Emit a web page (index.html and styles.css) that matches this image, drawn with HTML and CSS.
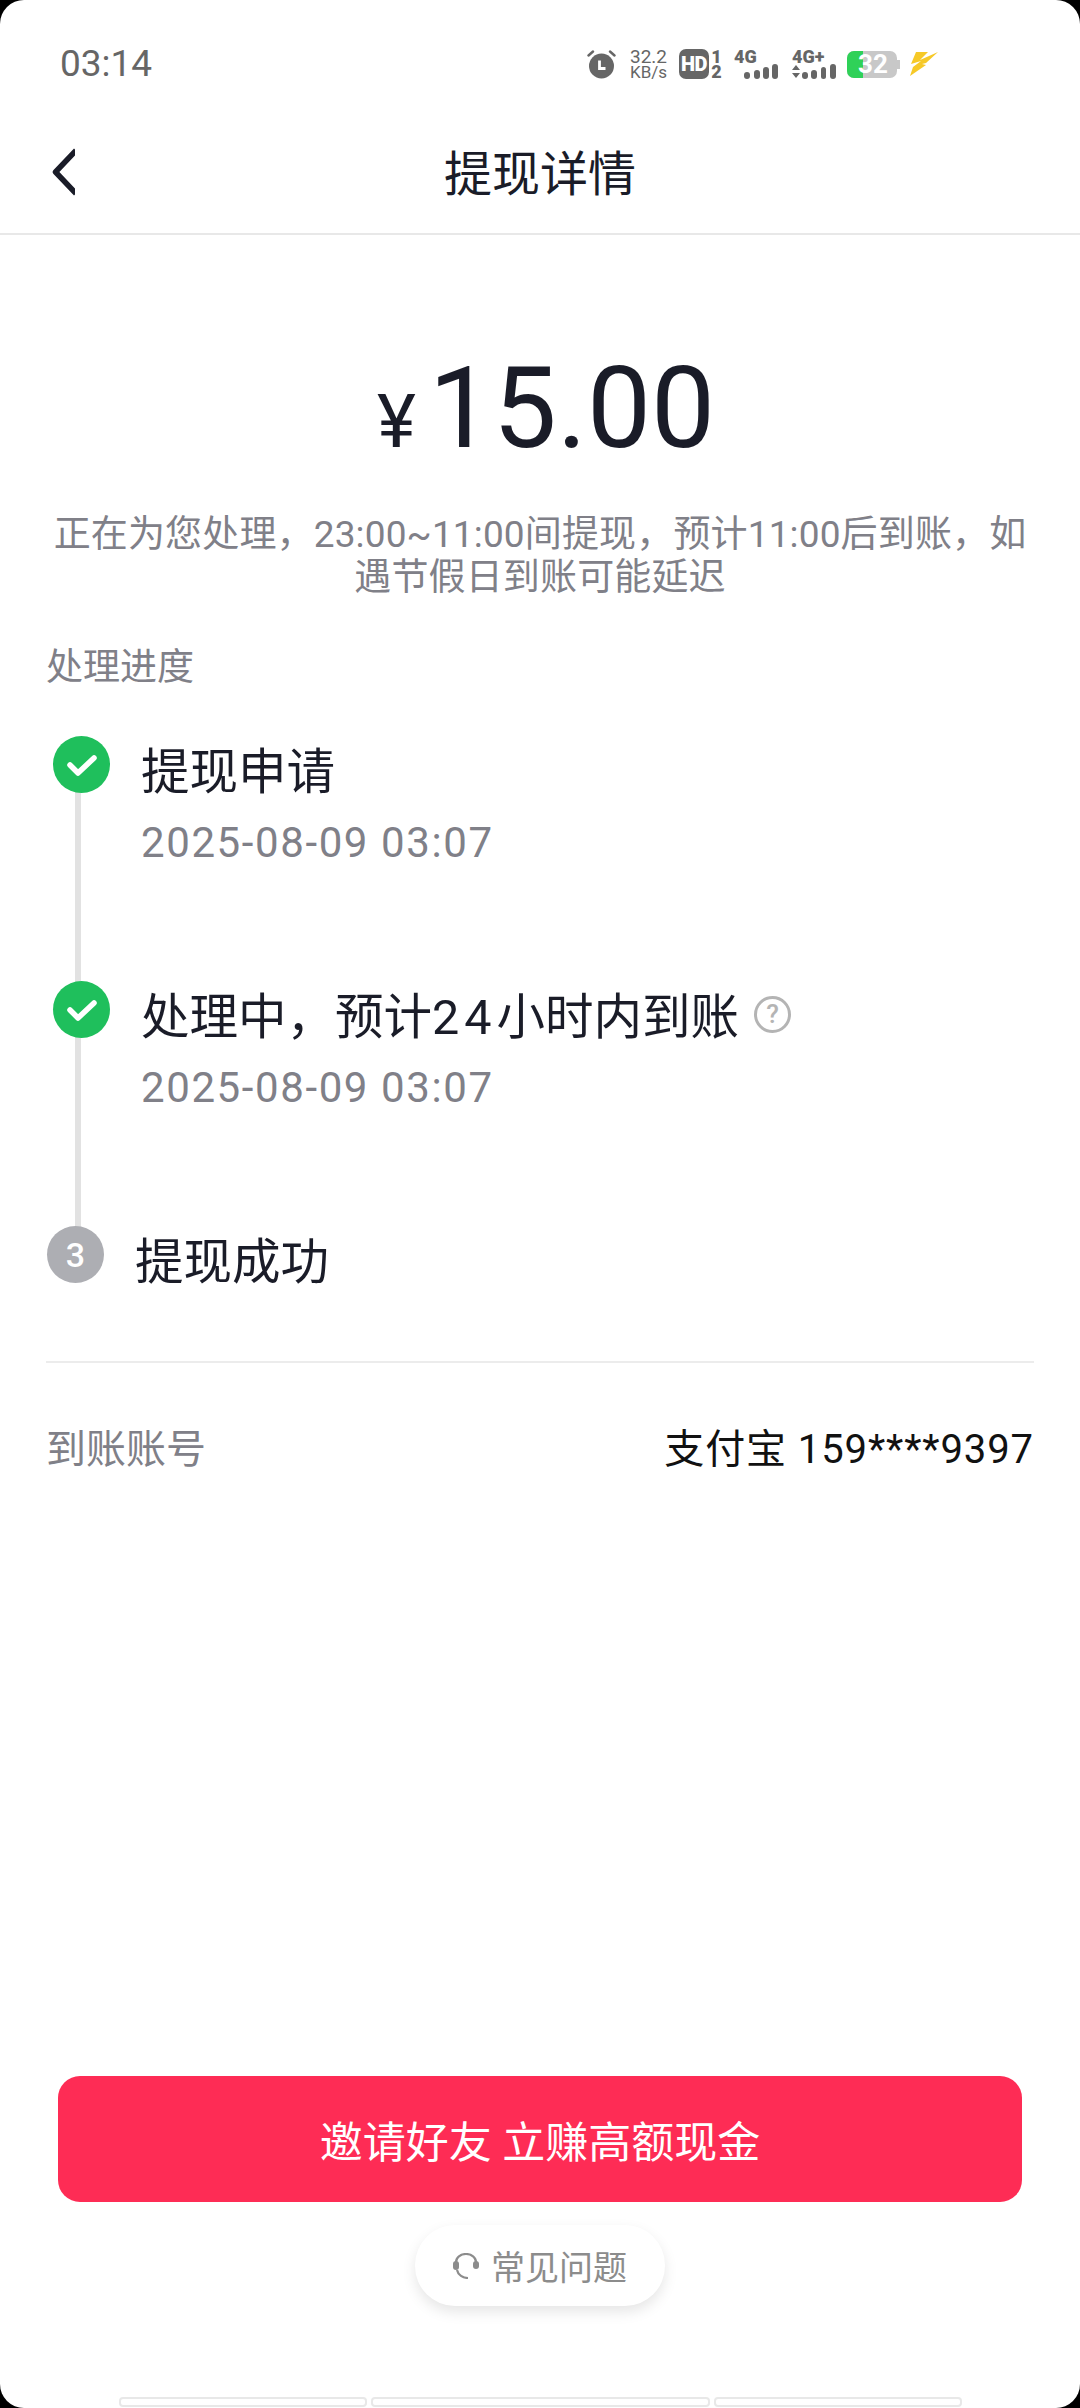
FILE: index.html
```html
<!DOCTYPE html>
<html lang="zh-CN">
<head>
  <meta charset="UTF-8" />
  <meta name="viewport" content="width=device-width, initial-scale=1" />
  <title>提现详情</title>
  <link rel="stylesheet" href="styles.css">
</head>
<body>
  <div class="screen">
    <div class="status-bar">
      <span class="clock">03:14</span>
      <div class="status-icons">
        <svg class="ic-alarm" width="29" height="29" viewBox="0 0 29 29">
          <circle cx="14.5" cy="16" r="12.500" fill="#666"/>
          <path d="M1.500 5.500l4.500-4M27.500 5.500l-4.500-4" stroke="#666" stroke-width="2.400" stroke-linecap="round"/>
          <path d="M12.500 10.500v8h6" fill="none" stroke="#fff" stroke-width="2.800"/>
        </svg>
        <div class="net-speed"><span class="speed-num">32.2</span><span class="speed-unit">KB/s</span></div>
        <div class="hd">
          <span class="hd-box">HD</span>
          <div class="hd-sims"><span>1</span><span>2</span></div>
        </div>
        <div class="signal signal-first">
          <span class="net-label">4G</span>
          <svg width="34" height="15" viewBox="0 0 34 15">
            <rect x="0" y="8" width="6" height="7" rx="3" fill="#666"/>
            <rect x="10" y="6" width="6" height="9" rx="3" fill="#666"/>
            <rect x="19" y="3" width="6" height="12" rx="3" fill="#666"/>
            <rect x="28" y="0" width="6" height="15" rx="3" fill="#666"/>
          </svg>
        </div>
        <div class="signal">
          <span class="net-label">4G+</span>
          <svg width="44" height="15" viewBox="0 0 44 15">
            <path d="M0 6l4-5 4 5zM0 9l4 5 4-5z" fill="#666"/>
            <rect x="10" y="8" width="6" height="7" rx="3" fill="#666"/>
            <rect x="19" y="6" width="6" height="9" rx="3" fill="#666"/>
            <rect x="29" y="3" width="5" height="12" rx="2.500" fill="#666"/>
            <rect x="38" y="0" width="6" height="15" rx="3" fill="#666"/>
          </svg>
        </div>
        <div class="battery">
          <div class="battery-fill"></div>
          <span class="battery-num">32</span>
          <div class="battery-tip"></div>
        </div>
        <svg class="ic-bolt" width="30" height="24" viewBox="0 0 30 24">
          <path d="M8 0h12l-8 8L30 0 18 11l-4 1 4 1L2 24l3-9 8-6-10 3z" fill="#f6c928"/>
        </svg>
      </div>
    </div>

    <header class="nav">
      <svg class="back" width="23" height="48" viewBox="0 0 23 48">
        <path d="M24 2.500L3.500 24 24 45.500" fill="none" stroke="#1a1c28" stroke-width="5.500" stroke-linejoin="round"/>
      </svg>
      <h1>提现详情</h1>
    </header>

    <main class="content">
      <div class="amount"><span class="yen">¥</span><span class="money">15.00</span></div>
      <p class="notice">正在为您处理，23:00~11:00间提现，预计11:00后到账，如遇节假日到账可能延迟</p>

      <div class="section-title">处理进度</div>

      <ol class="steps">
        <li class="step">
          <span class="dot dot-done">
            <svg width="32" height="24" viewBox="0 0 32 24"><path d="M4 12l8 8L28 5" fill="none" stroke="#fff" stroke-width="5.500" stroke-linecap="round" stroke-linejoin="round"/></svg>
          </span>
          <div class="step-body">
            <div class="step-title">提现申请</div>
            <div class="step-time">2025-08-09 03:07</div>
          </div>
        </li>
        <li class="step">
          <span class="dot dot-done">
            <svg width="32" height="24" viewBox="0 0 32 24"><path d="M4 12l8 8L28 5" fill="none" stroke="#fff" stroke-width="5.500" stroke-linecap="round" stroke-linejoin="round"/></svg>
          </span>
          <div class="step-body">
            <div class="step-title"><span>处理中，预计<span class="num">24</span>小时内到账</span>
              <span class="help">?</span>
            </div>
            <div class="step-time">2025-08-09 03:07</div>
          </div>
        </li>
        <li class="step step-last">
          <span class="dot dot-todo">3</span>
          <div class="step-body">
            <div class="step-title">提现成功</div>
          </div>
        </li>
      </ol>

      <div class="account">
        <span class="account-label">到账账号</span>
        <span class="account-value">支付宝 159****9397</span>
      </div>
    </main>

    <div class="bottom">
      <button class="invite" type="button">邀请好友 立赚高额现金</button>
      <div class="faq">
        <svg width="26" height="26" viewBox="0 0 26 26">
          <path d="M23 9A10 8 0 0 0 3 9M4 17c1 5 6 8 11 8" fill="none" stroke="#8c8c8c" stroke-width="2.200"/>
          <rect x="0" y="8" width="6" height="9" rx="3" fill="#8c8c8c"/>
          <rect x="20" y="8" width="6" height="8" rx="3" fill="#8c8c8c"/>
        </svg>
        <span>常见问题</span>
      </div>
    </div>

    <div class="ghost-tabs">
      <span class="tab-a"></span>
      <span class="tab-b"></span>
      <span class="tab-a"></span>
    </div>
  </div>
</body>
</html>
```
FILE: styles.css
```css
* {
  box-sizing: border-box;
}
html, body {
  margin: 0;
  background: #000;
}
body {
  font-family: "Roboto", "Noto Sans CJK SC", sans-serif;
  color: #1a1c28;
}
.screen {
  width: 1080px;
  height: 2408px;
  background: #fff;
  border-radius: 24px;
  overflow: hidden;
  display: flex;
  flex-direction: column;
}

/* status bar */
.status-bar {
  height: 122px;
  padding: 43px 142px 0 60px;
  display: flex;
  justify-content: space-between;
  align-items: flex-start;
}
.clock {
  font-size: 37px;
  line-height: 42px;
  color: #666;
}
.status-icons {
  display: flex;
  align-items: center;
  gap: 12px;
  height: 42px;
  color: #666;
}
.ic-alarm {
  margin-right: 2px;
}
.net-speed {
  display: flex;
  flex-direction: column;
  align-items: center;
  width: 37px;
}
.speed-num {
  font-size: 19px;
  line-height: 17px;
}
.speed-unit {
  font-size: 17px;
  line-height: 15px;
}
.hd {
  display: flex;
  gap: 2px;
  height: 30px;
}
.hd-box {
  width: 30px;
  height: 30px;
  border-radius: 7px;
  background: #666;
  color: #fff;
  font-size: 20px;
  font-weight: 900;
  line-height: 30px;
  text-align: center;
  letter-spacing: -0.5px;
}
.hd-sims {
  width: 11px;
  display: flex;
  flex-direction: column;
  align-items: center;
  justify-content: space-between;
  font-size: 18px;
  font-weight: 900;
  line-height: 15px;
}
.signal {
  width: 44px;
  height: 29px;
  display: flex;
  flex-direction: column;
  align-items: flex-end;
}
.signal-first {
  margin-right: 2px;
}
.net-label {
  align-self: flex-start;
  height: 14px;
  font-size: 18px;
  line-height: 14px;
  font-weight: 900;
}
.battery {
  position: relative;
  width: 50px;
  height: 27px;
  margin: 0 -1px;
  background: #c8c8c8;
  border-radius: 7px;
}
.battery-fill {
  width: 16px;
  height: 27px;
  background: #2fd158;
  border-radius: 7px 0 0 7px;
}
.battery-num {
  position: absolute;
  left: 11px;
  top: 0;
  font-size: 26px;
  line-height: 27px;
  font-weight: 700;
  color: #fff;
}
.battery-tip {
  position: absolute;
  right: -3px;
  top: 9px;
  width: 3px;
  height: 9px;
  background: #c8c8c8;
}

/* nav */
.nav {
  position: relative;
  height: 113px;
  padding-bottom: 6px;
  border-bottom: 2px solid #e8e8e8;
  display: flex;
  align-items: center;
  justify-content: center;
}
.nav h1 {
  margin: 0;
  font-size: 48px;
  font-weight: 400;
  line-height: 60px;
  color: #1a1c28;
}
.back {
  position: absolute;
  left: 52px;
  top: 26px;
}

/* content */
.content {
  flex: 1;
  padding: 0 46px;
}
.amount {
  margin-top: 118px;
  padding-left: 12px;
  height: 110px;
  display: flex;
  justify-content: center;
  align-items: baseline;
  line-height: 110px;
}
.yen {
  font-size: 74px;
  margin-right: 13px;
}
.money {
  font-size: 114px;
}
.notice {
  margin: 50px 0 0;
  font-size: 37px;
  line-height: 43px;
  letter-spacing: 0.150px;
  color: #808088;
  text-align: center;
}
.section-title {
  margin-top: 45px;
  font-size: 37px;
  line-height: 48px;
  color: #808088;
}
.steps {
  list-style: none;
  margin: 44px 0 0;
  padding: 0;
}
.step {
  position: relative;
  display: flex;
  height: 245px;
  padding-left: 7px;
}
.step::before {
  content: "";
  position: absolute;
  left: 29px;
  top: 50px;
  bottom: -10px;
  width: 6px;
  background: #e2e2e2;
}
.step-last {
  height: 58px;
  padding-left: 1px;
}
.step-last::before {
  display: none;
}
.dot {
  position: relative;
  flex: none;
  width: 57px;
  height: 57px;
  border-radius: 50%;
  display: flex;
  align-items: center;
  justify-content: center;
  color: #fff;
  font-size: 34px;
  font-weight: 500;
}
.dot-done {
  background: #1fbf5c;
}
.dot-todo {
  background: #adaeb3;
}
.step-body {
  margin: 5px 0 0 31px;
}
.step-title {
  display: flex;
  align-items: center;
  font-size: 48.500px;
  line-height: 64px;
  color: #1a1c28;
}
.num {
  letter-spacing: 5px;
}
.step-time {
  margin-top: 13px;
  font-size: 42px;
  line-height: 50px;
  letter-spacing: 1.600px;
  color: #808088;
}
.help {
  width: 37px;
  height: 37px;
  margin: -8px 0 0 15px;
  border: 3px solid #b4b4b4;
  border-radius: 50%;
  color: #b4b4b4;
  font-size: 26px;
  font-weight: 500;
  line-height: 31px;
  text-align: center;
}
.account {
  margin-top: 77px;
  border-top: 2px solid #ececec;
  padding-top: 62px;
  display: flex;
  justify-content: space-between;
  align-items: center;
  font-size: 40px;
  line-height: 50px;
}
.account-label {
  color: #808088;
}
.account-value {
  color: #111;
  letter-spacing: 0.900px;
}

/* bottom */
.bottom {
  display: flex;
  flex-direction: column;
  align-items: center;
}
.invite {
  width: 964px;
  height: 126px;
  border: none;
  border-radius: 22px;
  background: #fe2c55;
  color: #fff;
  font-family: inherit;
  font-size: 43px;
}
.faq {
  margin-top: 23px;
  width: 250px;
  height: 81px;
  border-radius: 40px;
  background: #fff;
  box-shadow: 0 6px 14px rgba(0,0,0,0.1);
  display: flex;
  align-items: center;
  justify-content: center;
  gap: 12px;
  font-size: 34px;
  color: #8c8c8c;
}
.ghost-tabs {
  margin: 91px 0 1px;
  height: 10px;
  display: flex;
  justify-content: center;
  gap: 4px;
}
.ghost-tabs span {
  height: 10px;
  border: 2px solid #e8e8e8;
  border-radius: 4px;
}
.tab-a {
  width: 248px;
}
.tab-b {
  width: 339px;
}
```
